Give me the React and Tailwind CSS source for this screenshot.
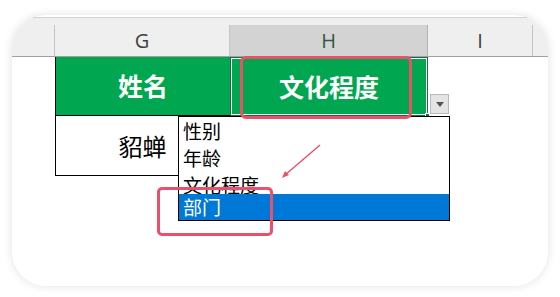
import React from "react";

const cjk = { fontFamily: '"Noto Sans CJK SC", "Noto Sans", sans-serif' };
const latin = { fontFamily: '"Open Sans", "Liberation Sans", sans-serif' };

export default function App() {
  return (
    <div className="w-[560px] h-[297px] bg-white pt-[15px] pl-[12px]">
      {/* card */}
      <div className="relative w-[536px] h-[271px] rounded-[34px] overflow-hidden bg-white shadow-[0_0_10px_rgba(0,0,0,0.12)]">
        <div className="h-[2px]" />
        {/* header band */}
        <div className="border-t border-[#d2d2d2] bg-[#efefef]">
          <div className="h-[7px]" />
          <div className="flex h-[32px] border-b border-[#a0a0a0] text-[20px]" style={latin}>
            <div className="w-[43px] border-r border-[#c4c4c4]" />
            <div className="w-[175px] border-r border-[#c4c4c4] flex items-center justify-center text-[#404040]">
              G
            </div>
            <div className="w-[198px] border-r border-[#b4b4b4] bg-[#d3d3d3] flex items-center justify-center text-[#2c5a42]">
              H
            </div>
            <div className="w-[105px] border-r border-[#c4c4c4] flex items-center justify-center text-[#404040]">
              I
            </div>
            <div className="flex-1" />
          </div>
        </div>

        {/* row 1 */}
        <div className="flex h-[59px]" style={cjk}>
          <div className="w-[43px]" />
          <div className="w-[175px] bg-[#00a650] border-l border-b border-black flex items-center justify-center text-white text-[25px] font-bold">
            姓名
          </div>
          <div className="relative w-[198px] bg-[#00a650] border border-[#1d6b40] shadow-[inset_0_0_0_1px_#ffffff] flex items-center justify-center text-white text-[25px] font-bold">
            文化程度
            <div className="absolute right-[-3px] bottom-[-3px] w-[5px] h-[5px] bg-[#1d6b40] border border-white" />
          </div>
        </div>

        {/* row 2 */}
        <div className="flex h-[60px]" style={cjk}>
          <div className="w-[43px]" />
          <div className="w-[175px] border-l border-b border-r border-black flex items-center justify-center text-[24px] text-black">
            貂蝉
          </div>
        </div>

        {/* dropdown button */}
        <div className="absolute left-[418px] top-[79px] w-[19px] h-[20px] bg-[#e4e4e4] border border-[#b8b8b8] flex items-center justify-center">
          <svg width="8" height="5" viewBox="0 0 8 5">
            <path d="M0 0 L8 0 L4 5 Z" fill="#555" />
          </svg>
        </div>

        {/* dropdown list */}
        <div
          className="absolute left-[166px] top-[101px] w-[272px] h-[105px] bg-white border border-black flex flex-col text-[19px] text-black"
          style={cjk}
        >
          <div className="h-[27px] leading-[27px] pl-[4px]">性别</div>
          <div className="h-[27px] leading-[27px] pl-[4px]">年龄</div>
          <div className="h-[24px] leading-[27px] pl-[4px] overflow-hidden">文化程度</div>
          <div className="h-[26px] leading-[26px] pl-[4px] bg-[#0078d7] text-white">部门</div>
        </div>

        {/* red highlights */}
        <div className="absolute left-[228px] top-[41px] w-[172px] h-[63px] rounded-[6px] border-[3px] border-[#e9506a]" />
        <div className="absolute left-[145px] top-[172px] w-[116px] h-[49px] rounded-[5px] border-[3px] border-[#e9506a]" />

        {/* red arrow */}
        <svg className="absolute left-[266px] top-[126px]" width="48" height="42" viewBox="0 0 48 42">
          <line x1="42" y1="4" x2="7" y2="34" stroke="#e9506a" strokeWidth="1.4" />
          <path d="M4 37 L7 30 L11 34 Z" fill="#e9506a" />
        </svg>
      </div>
    </div>
  );
}
